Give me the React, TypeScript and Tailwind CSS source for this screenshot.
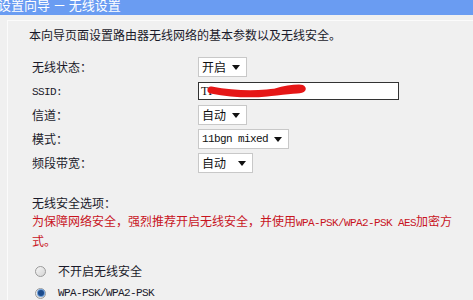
const cjk = "font-['Noto_Sans_CJK_SC','Noto_Sans',sans-serif]";
const latin = "font-['Liberation_Mono','Noto_Sans_CJK_SC',monospace] text-[11px] tracking-[-0.6px]";

const Arrow = () => (
  <svg width="8" height="5" viewBox="0 0 8 5" className="shrink-0">
    <path d="M0 0 L8 0 L4 5 Z" fill="#111" />
  </svg>
);

const Select = ({ label, width, mono }: { label: string; width: string; mono?: boolean }) => (
  <div
    className={`flex items-center justify-between h-[20px] bg-white border border-[#c8c8c8] pl-[3px] pr-[6px] ${width}`}
  >
    <span className={mono ? latin + " text-[#111]" : "text-[12px] text-[#111]"}>{label}</span>
    <Arrow />
  </div>
);

const Row = ({ label, children }: { label: React.ReactNode; children: React.ReactNode }) => (
  <div className="flex items-center h-[20px]">
    <div className="w-[166px] text-[12px] text-[#1a1a2a]">{label}</div>
    {children}
  </div>
);

const Radio = ({ checked }: { checked?: boolean }) => (
  <span className="w-[11px] h-[11px] rounded-full border border-[#9a9a9a] bg-gradient-to-br from-[#f6f6f6] to-[#d4d4d4] flex items-center justify-center shrink-0">
    {checked && <span className="w-[6px] h-[6px] rounded-full bg-[#1d4c8c] ring-1 ring-[#6f9fd8]" />}
  </span>
);

export default function App() {
  return (
    <div className={`w-[473px] h-[300px] overflow-hidden bg-[#f0f0f0] ${cjk}`}>
      {/* title bar, cut off at the top */}
      <div className="h-[15px] bg-[#6a9cf2] overflow-hidden">
        <div className="relative -top-[4px] -ml-[2px] text-[13px] leading-[18px] text-white whitespace-nowrap">
          设置向导 － 无线设置
        </div>
      </div>

      <div className="mt-[5px] ml-[7px] h-[280px] border-l border-t border-[#fbfbfb] pl-[24px] pt-[7px]">
        <div className="-ml-[3px] text-[12px] leading-[14px] text-[#1a1a2a]">
          本向导页面设置路由器无线网络的基本参数以及无线安全。
        </div>

        <div className="mt-[15px] flex flex-col gap-[4px]">
          <Row label="无线状态：">
            <Select label="开启" width="w-[49px]" />
          </Row>
          <Row label={<span className={latin}>SSID:</span>}>
            <div className="relative flex items-center w-[201px] h-[18px] bg-white border border-[#333]">
              <span className="pl-[2px] text-[12px] font-['Liberation_Serif',serif] text-[#111]">TP</span>
              {/* redacted part of the network name */}
              <svg width="100" height="16" viewBox="0 0 100 16" className="absolute left-[8px] top-[0px]">
                <path
                  d="M4 7 C20 10, 40 12, 60 10 C70 9, 78 8, 90 7 C96 7, 97 5, 92 5 C84 5, 75 7, 68 9"
                  stroke="#e51616"
                  strokeWidth="7"
                  strokeLinecap="round"
                  fill="none"
                />
              </svg>
            </div>
          </Row>
          <Row label="信道：">
            <Select label="自动" width="w-[49px]" />
          </Row>
          <Row label="模式：">
            <Select label="11bgn mixed" width="w-[91px]" mono />
          </Row>
          <Row label="频段带宽：">
            <Select label="自动" width="w-[55px]" />
          </Row>
        </div>

        <div className="mt-[23px] text-[12px] leading-[14px] text-[#1a1a2a]">无线安全选项：</div>
        <div className="mt-[2px] w-[428px] text-[12px] leading-[18px] text-[#c8141e]">
          为保障网络安全，强烈推荐开启无线安全，并使用
          <span className={latin}>WPA-PSK/WPA2-PSK AES</span>加密方式。
        </div>

        <div className="mt-[11px] flex flex-col gap-[2px]">
          <div className="flex items-center h-[20px] pl-[3px] gap-[12px]">
            <Radio />
            <span className="text-[12px] text-[#1a1a2a]">不开启无线安全</span>
          </div>
          <div className="flex items-center h-[20px] pl-[3px] gap-[12px]">
            <Radio checked />
            <span className={latin + " text-[#1a1a2a]"}>WPA-PSK/WPA2-PSK</span>
          </div>
        </div>
      </div>
    </div>
  );
}
